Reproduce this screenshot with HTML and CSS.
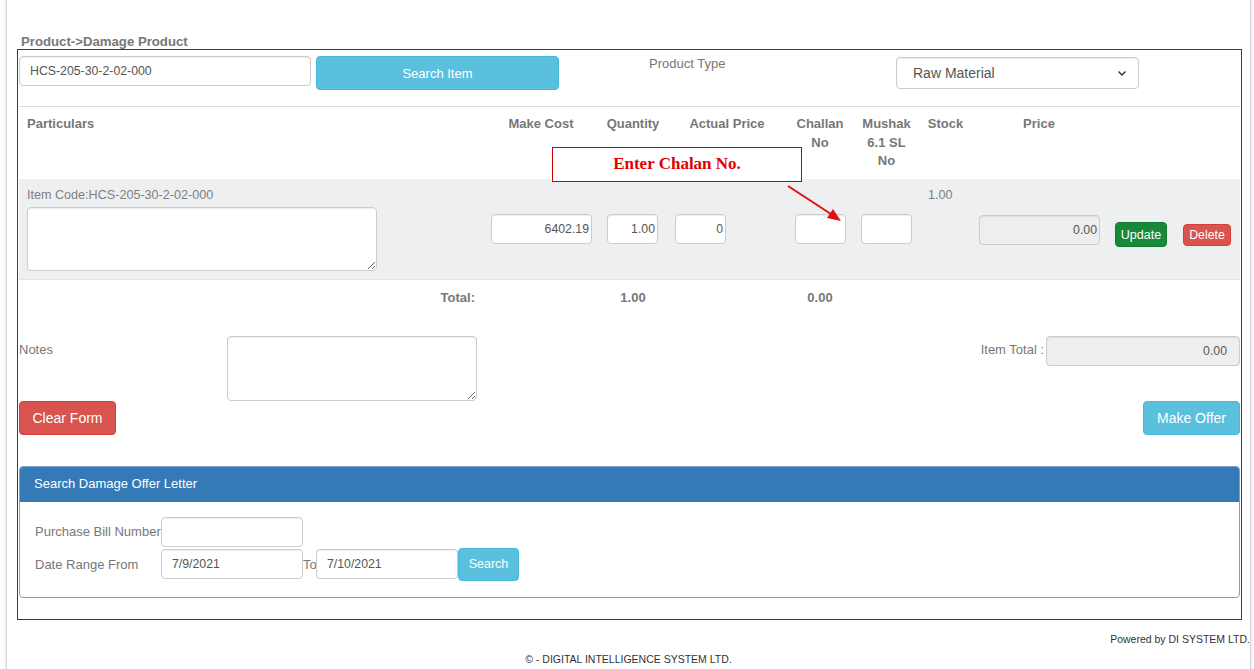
FILE: index.html
```html
<!DOCTYPE html>
<html>
<head>
<meta charset="utf-8">
<title>Damage Product</title>
<link rel="stylesheet" href="styles.css">
</head>
<body>
<div class="page">
  <div class="crumb">Product-&gt;Damage Product</div>
  <div class="frame">
    <div class="toprow">
      <input class="ctl code" type="text" value="HCS-205-30-2-02-000">
      <button class="btn info search-item">Search Item</button>
      <div class="ptype">Product Type</div>
      <div class="ctl select">
        <span>Raw Material</span>
        <svg width="10" height="7" viewBox="0 0 10 7"><path d="M1.5 1.5 L5 5 L8.5 1.5" fill="none" stroke="#333" stroke-width="1.4"/></svg>
      </div>
    </div>

    <table class="grid">
      <colgroup>
        <col class="c-part"><col class="c-cost"><col class="c-qty"><col class="c-act"><col class="c-chal"><col class="c-mush"><col class="c-stock"><col class="c-price"><col class="c-upd"><col class="c-del">
      </colgroup>
      <thead>
        <tr class="head">
          <th class="left">Particulars</th>
          <th>Make Cost</th>
          <th>Quantity</th>
          <th>Actual Price</th>
          <th>Challan<br>No</th>
          <th>Mushak<br>6.1 SL<br>No</th>
          <th>Stock</th>
          <th>Price</th>
          <th></th>
          <th></th>
        </tr>
      </thead>
      <tbody>
        <tr class="item">
          <td class="part">
            <div class="icode">Item Code:HCS-205-30-2-02-000</div>
            <textarea class="ctl desc"></textarea>
          </td>
          <td><input class="ctl num w100" type="text" value="6402.19"></td>
          <td><input class="ctl num w50" type="text" value="1.00"></td>
          <td><input class="ctl num w50" type="text" value="0"></td>
          <td><input class="ctl num w50" type="text" value=""></td>
          <td><input class="ctl num w50" type="text" value=""></td>
          <td class="stock">1.00</td>
          <td><input class="ctl num w120 dis" type="text" value="0.00" disabled></td>
          <td><button class="btn sm green">Update</button></td>
          <td><button class="btn xs red">Delete</button></td>
        </tr>
        <tr class="total">
          <td class="right">Total:</td>
          <td></td>
          <td>1.00</td>
          <td></td>
          <td>0.00</td>
          <td></td><td></td><td></td><td></td><td></td>
        </tr>
      </tbody>
    </table>

    <div class="notes">
      <label class="notes-label">Notes</label>
      <textarea class="ctl notes-area"></textarea>
      <div class="spacer"></div>
      <label class="it-label">Item Total :</label>
      <input class="ctl it-input dis" type="text" value="0.00" disabled>
    </div>

    <div class="actions">
      <button class="btn red lg">Clear Form</button>
      <button class="btn info lg">Make Offer</button>
    </div>

    <div class="panel">
      <div class="panel-head">Search Damage Offer Letter</div>
      <div class="panel-body">
        <div class="prow">
          <label class="plabel">Purchase Bill Number</label>
          <input class="ctl pin" type="text">
        </div>
        <div class="prow r2">
          <label class="plabel">Date Range From</label>
          <input class="ctl pin" type="text" value="7/9/2021">
          <span class="to">To</span>
          <input class="ctl pin" type="text" value="7/10/2021">
          <button class="btn info psearch">Search</button>
        </div>
      </div>
    </div>

    <div class="callout">Enter Chalan No.</div>
    <svg class="arrow" width="70" height="45" viewBox="0 0 70 45">
      <line x1="8" y1="3" x2="54" y2="33" stroke="#e01010" stroke-width="2"/>
      <polygon points="61,38 47,35 53,26" fill="#e01010"/>
    </svg>
  </div>
  <div class="powered">Powered by DI SYSTEM LTD.</div>
  <div class="copy">&copy; - DIGITAL INTELLIGENCE SYSTEM LTD.</div>
</div>
</body>
</html>
```
FILE: styles.css
```css
html, body {
  margin: 0;
  padding: 0;
  background: #fff;
}
body {
  font-family: "Liberation Sans", Arial, sans-serif;
  color: #555;
  font-size: 13px;
}
.page {
  margin-left: 6px;
  width: 1245px;
  min-height: 669px;
  box-sizing: border-box;
  border-left: 1px solid #d6d6d6;
  border-right: 1px solid #d6d6d6;
  box-shadow: 0 0 3px rgba(0,0,0,0.18);
  padding-top: 34px;
  background: #fff;
}
.crumb {
  margin-left: 14px;
  font-weight: bold;
  color: #777;
  font-size: 13.2px;
  line-height: 15px;
}
.frame {
  position: relative;
  margin-left: 10px;
  width: 1225px;
  box-sizing: border-box;
  border: 1px solid #d40000;
  padding: 0 1px 21px;
}
.ctl {
  font-family: "Liberation Sans", Arial, sans-serif;
  font-size: 12.3px;
  color: #555;
  background: #fff;
  border: 1px solid #ccc;
  border-radius: 4px;
  box-shadow: inset 0 1px 1px rgba(0,0,0,0.075);
  box-sizing: border-box;
  outline: none;
}
.btn {
  font-family: "Liberation Sans", Arial, sans-serif;
  color: #fff;
  border: 1px solid transparent;
  border-radius: 4px;
  cursor: pointer;
  padding: 0;
}
.btn.info { background: #5bc0de; border-color: #46b8da; }
.btn.red { background: #d9534f; border-color: #d43f3a; }
.btn.green { background: #178a3a; border-color: #137a32; }

.toprow {
  display: flex;
  align-items: flex-start;
  height: 56px;
  box-sizing: border-box;
  padding-top: 6px;
}
.code {
  width: 292px;
  height: 30px;
  padding: 0 10px;
}
.search-item {
  margin-left: 5px;
  width: 243px;
  height: 34px;
  font-size: 13px;
}
.ptype {
  margin-left: 90px;
  width: 247px;
  color: #777;
  font-size: 13px;
  line-height: 16px;
}
.select {
  margin-top: 1px;
  width: 243px;
  height: 32px;
  display: flex;
  align-items: center;
  justify-content: space-between;
  padding: 0 11px 0 16px;
  font-size: 14px;
}

.grid {
  width: 1221px;
  table-layout: fixed;
  border-collapse: collapse;
  border-top: 1px solid #ddd;
}
.c-part { width: 464px; }
.c-cost { width: 116px; }
.c-qty { width: 68px; }
.c-act { width: 120px; }
.c-chal { width: 66px; }
.c-mush { width: 67px; }
.c-stock { width: 51px; }
.c-price { width: 136px; }
.c-upd { width: 68px; }
.c-del { width: 65px; }
.grid th {
  font-weight: bold;
  color: #777;
  font-size: 13px;
  line-height: 18.5px;
  padding: 8px 0;
  text-align: center;
  vertical-align: top;
  white-space: nowrap;
}
.grid th.left { text-align: left; padding-left: 8px; }
.grid tr.head { height: 72px; }
.grid tr.item { height: 100px; }
.grid tr.item td {
  background: #eeeff1;
  padding: 8px;
  vertical-align: middle;
  border-bottom: 1px solid #e2e3e5;
}
.grid tr.item td.part { vertical-align: top; }
.icode {
  color: #808080;
  font-size: 12.6px;
  line-height: 17px;
}
.desc {
  display: block;
  margin-top: 3px;
  width: 350px;
  height: 64px;
  resize: vertical;
}
.num {
  height: 30px;
  text-align: right;
  padding: 0 2px 0 4px;
  display: block;
}
.w100 { width: 101px; }
.w50 { width: 51px; }
.w120 { width: 121px; height: 30px; margin-top: 2px; }
.dis { background: #eee; color: #555; }
.grid tr.item td.stock {
  vertical-align: top;
  color: #808080;
  font-size: 12.6px;
  line-height: 17px;
  padding-left: 8px;
}
.btn.sm {
  width: 52px;
  height: 25px;
  font-size: 12.5px;
  margin-top: 12px;
}
.btn.xs {
  width: 48px;
  height: 22px;
  font-size: 12.3px;
  margin-top: 12px;
}
.grid tr.total td {
  padding: 8px 0;
  line-height: 20px;
  font-weight: bold;
  color: #777;
  font-size: 13px;
  text-align: center;
}
.grid tr.total td.right { text-align: right; padding-right: 8px; }

.notes {
  display: flex;
  align-items: flex-start;
  margin-top: 20px;
}
.notes-label {
  width: 208px;
  color: #777;
  font-size: 13px;
  line-height: 28px;
}
.notes-area {
  width: 250px;
  height: 65px;
  resize: vertical;
}
.spacer { flex: 1; }
.it-label {
  color: #777;
  font-size: 13px;
  line-height: 28px;
  margin-right: 2px;
}
.it-input {
  width: 194px;
  height: 30px;
  text-align: right;
  padding: 0 12px;
}
.actions {
  display: flex;
  justify-content: space-between;
}
.btn.lg {
  width: 97px;
  height: 34px;
  font-size: 14px;
}

.panel {
  margin-top: 31px;
  border: 1px solid #7f9fcc;
  border-radius: 4px;
  overflow: hidden;
}
.panel-head {
  background: #337ab7;
  color: #fff;
  font-size: 13px;
  height: 36px;
  line-height: 36px;
  padding-left: 15px;
  margin: -1px -1px 0;
}
.panel-body {
  padding: 15px 15px 16px;
}
.prow {
  display: flex;
  align-items: center;
}
.prow.r2 { margin-top: 1px; }
.plabel {
  width: 126px;
  color: #777;
  font-size: 13px;
  white-space: nowrap;
}
.pin {
  width: 142px;
  height: 30px;
  padding: 0 10px;
}
.to {
  color: #777;
  font-size: 13px;
  width: 13px;
}
.psearch {
  width: 61px;
  height: 33px;
  font-size: 12.5px;
}

.callout {
  position: absolute;
  left: 534px;
  top: 97px;
  width: 250px;
  height: 35px;
  box-sizing: border-box;
  border: 1px solid #d00000;
  background: #fff;
  color: #e00000;
  font-family: "Liberation Serif", "Times New Roman", serif;
  font-weight: bold;
  font-size: 17px;
  line-height: 32px;
  text-align: center;
}
.arrow {
  position: absolute;
  left: 762px;
  top: 133px;
}

.powered {
  margin-top: 12px;
  text-align: right;
  font-size: 10.5px;
  line-height: 14px;
  color: #333;
}
.copy {
  margin-top: 6px;
  text-align: center;
  font-size: 10.5px;
  line-height: 14px;
  color: #333;
}
```
